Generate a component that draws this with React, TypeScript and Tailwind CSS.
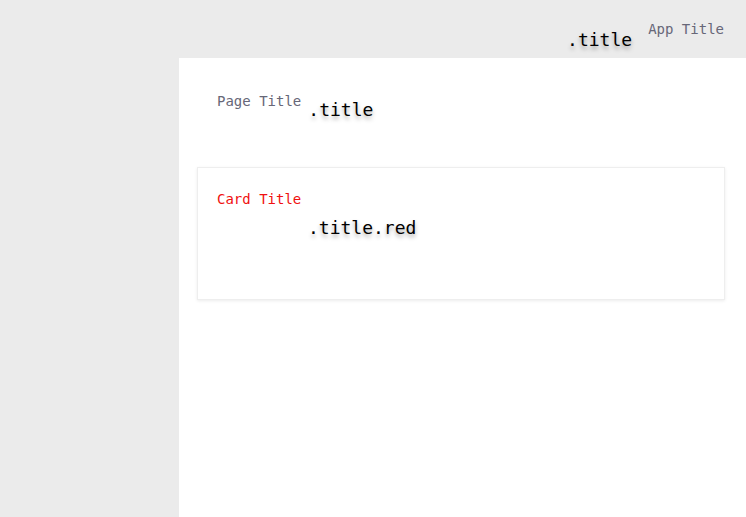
export default function App() {
  const mono = { fontFamily: '"DejaVu Sans Mono", "Liberation Mono", monospace' };
  const shadow = "[text-shadow:0_3px_4px_rgba(0,0,0,0.35)]";
  return (
    <div className="flex flex-col w-[746px] h-[517px] bg-[#ebebeb] overflow-hidden" style={mono}>
      <header className="h-[58px] flex justify-end items-start pr-[22px] shrink-0">
        <span className={`mt-[29px] text-[18px] leading-[22px] text-black ${shadow}`}>.title</span>
        <span className="ml-[16px] mt-[19px] text-[14px] leading-[20px] text-[#676778]">App Title</span>
      </header>
      <div className="flex flex-1">
        <aside className="w-[179px] shrink-0" />
        <main className="flex-1 bg-white pt-[30px] pl-[18px] pr-[21px]">
          <div className="flex items-start pl-[20px]">
            <span className="mt-[3px] text-[14px] leading-[20px] text-[#676778]">Page Title</span>
            <span className={`ml-[7px] mt-[11px] text-[18px] leading-[22px] text-black ${shadow}`}>.title</span>
          </div>
          <div className="mt-[46px] h-[133px] border border-[#eeeeee] shadow-[0_1px_3px_rgba(0,0,0,0.08)] bg-white pl-[19px] pt-[21px]">
            <div className="text-[14px] leading-[20px] text-[#f01010]">Card Title</div>
            <div className={`ml-[91px] mt-[8px] text-[18px] leading-[22px] text-black ${shadow}`}>.title.red</div>
          </div>
        </main>
      </div>
    </div>
  );
}
